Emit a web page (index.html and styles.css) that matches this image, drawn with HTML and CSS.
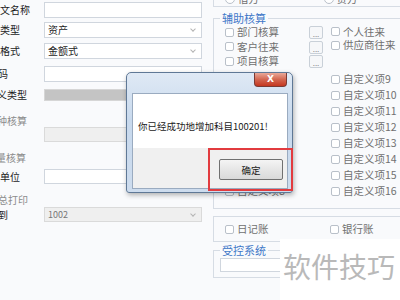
FILE: index.html
```html
<!DOCTYPE html>
<html lang="zh-CN">
<head>
    <meta charset="UTF-8">
    <title>增加会计科目</title>
    <link rel="stylesheet" href="styles.css">
</head>
<body>
<div class="page">
    <div class="left">
        <div class="row first">
            <div class="label pad-14"><span>科目英文名称</span></div>
            <div class="field"></div>
        </div>
        <div class="row gap-4">
            <div class="label pad-24"><span>科目类型</span></div>
            <div class="field select"><span>资产</span><i class="arrow"></i></div>
        </div>
        <div class="row gap-5">
            <div class="label pad-24"><span>账页格式</span></div>
            <div class="field select"><span>金额式</span><i class="arrow"></i></div>
        </div>
        <div class="row gap-7">
            <div class="label pad-36"><span>助记码</span></div>
            <div class="field"></div>
        </div>
        <div class="row gap-7 short">
            <div class="label pad-17"><span>自定义类型</span></div>
            <div class="field dark"></div>
        </div>
        <div class="row gap-14 short">
            <div class="label pad-17 muted"><span>币种核算</span></div>
        </div>
        <div class="row mid">
            <div class="label"></div>
            <div class="field off"></div>
        </div>
        <div class="row gap-10 short">
            <div class="label pad-18 muted"><span>数量核算</span></div>
        </div>
        <div class="row gap-5 mid">
            <div class="label pad-24"><span>计量单位</span></div>
            <div class="field"></div>
        </div>
        <div class="row gap-10 short">
            <div class="label pad-16 muted"><span>汇总打印</span></div>
        </div>
        <div class="row gap-1 mid">
            <div class="label pad-36"><span>汇总到</span></div>
            <div class="field select off"><span class="grey">1002</span><i class="arrow"></i></div>
        </div>
    </div>

    <div class="right">
        <div class="box top-box">
            <div class="pair">
                <label class="opt"><i class="radio"></i>借方</label>
                <label class="opt"><i class="radio"></i>贷方</label>
            </div>
        </div>

        <fieldset class="group aux">
            <legend>辅助核算</legend>
            <div class="cols">
                <div class="col col-left">
                    <label class="opt r1"><i class="check"></i>部门核算</label>
                    <label class="opt r1"><i class="check"></i>客户往来</label>
                    <label class="opt r1"><i class="check"></i>项目核算</label>
                    <div class="spacer-a"></div>
                    <label class="opt r2"><i class="check"></i>自定义项1</label>
                    <label class="opt r2"><i class="check"></i>自定义项2</label>
                    <label class="opt r2"><i class="check"></i>自定义项3</label>
                    <label class="opt r2"><i class="check"></i>自定义项4</label>
                    <label class="opt r2"><i class="check"></i>自定义项5</label>
                    <label class="opt r2"><i class="check"></i>自定义项6</label>
                    <label class="opt r2"><i class="check"></i>自定义项7</label>
                    <label class="opt r2"><i class="check"></i>自定义项8</label>
                </div>
                <div class="col col-btn">
                    <span class="more">...</span>
                    <span class="more">...</span>
                    <span class="more">...</span>
                </div>
                <div class="col col-right">
                    <label class="opt r3"><i class="check"></i>个人往来</label>
                    <label class="opt r3"><i class="check"></i>供应商往来</label>
                    <div class="spacer-b"></div>
                    <label class="opt r2"><i class="check"></i>自定义项9</label>
                    <label class="opt r2"><i class="check"></i>自定义项10</label>
                    <label class="opt r2"><i class="check"></i>自定义项11</label>
                    <label class="opt r2"><i class="check"></i>自定义项12</label>
                    <label class="opt r2"><i class="check"></i>自定义项13</label>
                    <label class="opt r2"><i class="check"></i>自定义项14</label>
                    <label class="opt r2"><i class="check"></i>自定义项15</label>
                    <label class="opt r2"><i class="check"></i>自定义项16</label>
                </div>
            </div>
        </fieldset>

        <div class="box books">
            <div class="pair">
                <label class="opt"><i class="check"></i>日记账</label>
                <label class="opt"><i class="check"></i>银行账</label>
            </div>
        </div>

        <fieldset class="group ctrl">
            <legend>受控系统</legend>
            <div class="field ctrl-field"></div>
        </fieldset>
    </div>
</div>

<!-- message box on top of the form -->
<div class="dialog">
    <span class="close">X</span>
    <div class="client">
        <div class="msg">你已经成功地增加科目100201!</div>
        <div class="foot">
            <button class="ok">确定</button>
        </div>
    </div>
</div>
<div class="mark"></div>

<div class="watermark">软件技巧</div>
</body>
</html>
```

FILE: styles.css
```css
body {
    margin: 0;
    width: 400px;
    height: 300px;
    overflow: hidden;
    position: relative;
    background-color: #f9fafc;
    font-family: "Noto Sans CJK SC", "Liberation Sans", sans-serif;
    font-size: 10px;
    color: #1c1c1c;
}

.page {
    display: flex;
}

/* left form */
.left {
    width: 202px;
    flex-shrink: 0;
    padding-top: 2px;
}

.row {
    display: flex;
    align-items: center;
    height: 16px;
}

.row.short { height: 12px; }
.row.mid { height: 15px; }

.gap-1 { margin-top: 1px; }
.gap-4 { margin-top: 4px; }
.gap-5 { margin-top: 5px; }
.gap-7 { margin-top: 7px; }
.gap-10 { margin-top: 10px; }
.gap-14 { margin-top: 14px; }

.label {
    width: 44px;
    flex-shrink: 0;
    display: flex;
    justify-content: flex-end;
    box-sizing: border-box;
    white-space: nowrap;
    line-height: 12px;
}

.pad-14 { padding-right: 14px; }
.pad-16 { padding-right: 16px; }
.pad-17 { padding-right: 17px; }
.pad-18 { padding-right: 18px; }
.pad-24 { padding-right: 24px; }
.pad-36 { padding-right: 36px; }

.muted { color: #8c8c8c; }

.field {
    flex: 1;
    height: 100%;
    box-sizing: border-box;
    border: 1px solid #d0d6de;
    background-color: #fff;
}

.field.dark {
    background-color: #c4c4c4;
    border-color: #d6d6d6;
}

.field.off {
    background-color: #efefef;
    border-color: #dadada;
}

.select {
    display: flex;
    align-items: center;
    justify-content: space-between;
    padding: 0 6px 0 3px;
    line-height: 12px;
}

.grey { color: #777; font-size: 9px; }

.arrow {
    width: 3px;
    height: 3px;
    border-right: 1px solid #b4b4b4;
    border-bottom: 1px solid #b4b4b4;
    transform: rotate(45deg);
    margin-top: -2px;
}

/* right side groups */
.right {
    margin-left: 11px;
    width: 210px;
    flex-shrink: 0;
    font-size: 10.5px;
    color: #707070;
}

.box {
    border: 1px solid #d6dce4;
    box-sizing: border-box;
    padding-left: 11px;
}

.top-box {
    height: 27px;
    margin-top: -20px;
    padding-top: 11px;
}

.pair {
    display: flex;
}

.pair .opt {
    width: 105px;
}

.opt {
    display: flex;
    align-items: center;
    white-space: nowrap;
    line-height: 14px;
}

.check, .radio {
    width: 9px;
    height: 9px;
    box-sizing: border-box;
    border: 1px solid #b9c0c9;
    background-color: #fff;
    border-radius: 2px;
    margin-right: 3px;
    flex-shrink: 0;
}

.radio {
    width: 10px;
    height: 10px;
    border-radius: 50%;
}

.group {
    margin: 0;
    border: 1px solid #d6dce4;
    padding: 0 0 0 11px;
    min-width: 0;
}

.group legend {
    font-size: 11px;
    line-height: 14px;
    color: #3f78c8;
    padding: 0 2px;
    margin-left: -5px;
}

.aux {
    margin-top: 4px;
    padding-bottom: 9px;
}

.cols {
    display: flex;
}

.col {
    display: flex;
    flex-direction: column;
}

.col-left { width: 84px; }

.col-btn {
    width: 14px;
    margin-right: 8px;
    padding-top: 1px;
    gap: 1.5px;
}

.r1 { height: 14.5px; }
.r2 { height: 16px; }
.r3 { height: 13.5px; }

.spacer-a { height: 2.5px; }
.spacer-b { height: 19px; }

.more {
    height: 13px;
    box-sizing: border-box;
    border: 1px solid #c9d0d8;
    border-radius: 2px;
    background-color: #f6f7f9;
    color: #8a8a8a;
    font-size: 8px;
    line-height: 14px;
    text-align: center;
}

.books {
    margin-top: 7px;
    height: 26px;
    display: flex;
    align-items: center;
}

.ctrl {
    margin-top: 1px;
    padding-top: 1px;
    padding-bottom: 5px;
}

.ctrl-field {
    height: 14px;
    margin-left: -5px;
    flex: none;
}

/* message box */
.dialog {
    position: absolute;
    left: 126px;
    top: 72px;
    width: 167px;
    height: 121px;
    box-sizing: border-box;
    border: 1px solid #5f7896;
    border-radius: 5px 5px 3px 3px;
    background: linear-gradient(#dfe9f5, #c8d9ed 40%, #cddcee);
    box-shadow: 1px 2px 5px rgba(0, 0, 0, 0.3);
    padding: 20px 4px 3px 5px;
    display: flex;
    flex-direction: column;
}

.close {
    position: absolute;
    top: 0;
    right: 5px;
    width: 33px;
    height: 14px;
    border: 1px solid #7a3a34;
    border-top: none;
    border-radius: 0 0 4px 4px;
    box-sizing: border-box;
    background: linear-gradient(#e9a898, #d36650 50%, #c4361f);
    color: #fff;
    font-family: "DejaVu Sans", sans-serif;
    font-weight: bold;
    font-size: 9px;
    line-height: 13px;
    text-align: center;
}

.client {
    flex: 1;
    display: flex;
    flex-direction: column;
    border: 1px solid #9aabc0;
    background-color: #fff;
}

.msg {
    height: 54px;
    box-sizing: border-box;
    padding: 26px 0 0 5px;
    font-size: 9.5px;
    line-height: 12px;
    color: #1a1a1a;
    white-space: nowrap;
}

.foot {
    flex: 1;
    background-color: #f0f0f0;
    display: flex;
    justify-content: flex-end;
    align-items: flex-start;
    padding: 11px 4px 0 0;
}

.ok {
    width: 64px;
    height: 21px;
    border: 1px solid #707070;
    border-radius: 2px;
    background: linear-gradient(#f4f4f4, #e6e6e6 50%, #d9d9d9);
    font-family: "Noto Sans CJK SC", sans-serif;
    font-size: 9.5px;
    color: #1a1a1a;
    padding: 0;
}

.mark {
    position: absolute;
    left: 208px;
    top: 148px;
    width: 85px;
    height: 43px;
    box-sizing: border-box;
    border: 2px solid #e23b3f;
}

.watermark {
    position: absolute;
    left: 280px;
    top: 239px;
    width: 120px;
    height: 61px;
    box-sizing: border-box;
    background-color: #fff;
    padding: 12px 0 0 3px;
    font-size: 28px;
    line-height: 30px;
    color: #b9b9b9;
    white-space: nowrap;
}
```
